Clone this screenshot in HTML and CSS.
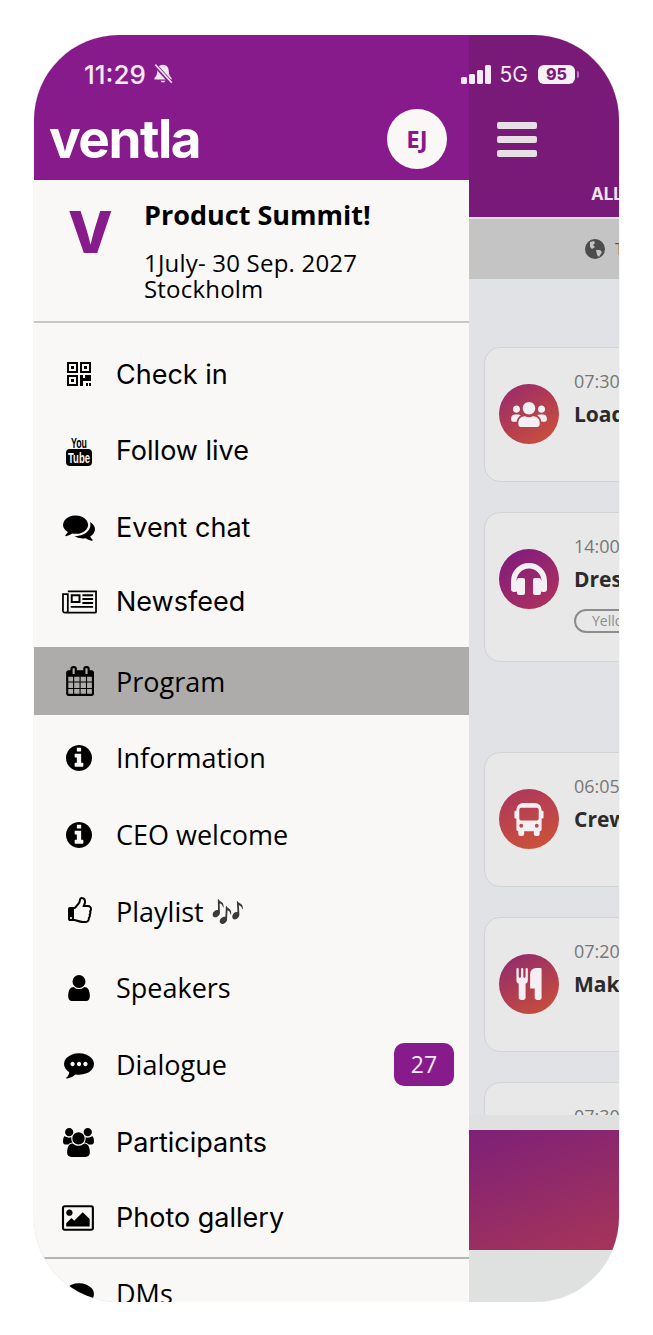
FILE: index.html
```html
<!DOCTYPE html>
<html lang="en">
<head>
  <meta charset="UTF-8">
  <meta name="viewport" content="width=device-width, initial-scale=1.0">
  <title>Ventla Product Summit</title>
  <link rel="stylesheet" href="styles.css">
</head>
<body>
  <div class="phone">

    <!-- Status bar sits over both the drawer and the page behind it -->
    <div class="status-bar">
      <div class="status-left">
        <span class="clock">11:29</span>
        <svg class="bell" viewBox="0 0 20 20"><path d="M10 1.5c-3.4 0-5.2 2.6-5.2 5.6 0 3.6-1.1 5-2.6 6.6v1.2h15.6v-1.2c-1.5-1.6-2.6-3-2.6-6.6 0-3-1.8-5.6-5.2-5.6z" fill="#f4e6f4"/><path d="M7.8 16.2a2.3 2.3 0 0 0 4.4 0z" fill="#f4e6f4"/><path d="M2.5 1.5l15 16.5" stroke="#871b8a" stroke-width="3.6"/><path d="M3 1.5l15 16.5" stroke="#f4e6f4" stroke-width="1.5"/></svg>
      </div>
      <div class="status-right">
        <div class="signal"><i class="bar-1"></i><i class="bar-2"></i><i class="bar-3"></i><i class="bar-4"></i></div>
        <span class="net">5G</span>
        <span class="battery">95</span>
        <span class="battery-nub"></span>
      </div>
    </div>

    <aside class="drawer">
      <header class="drawer-head">
        <span class="logo">ventla</span>
        <span class="avatar">EJ</span>
      </header>

      <div class="event-info">
        <span class="event-mark">V</span>
        <div class="event-text">
          <h1>Product Summit!</h1>
          <p>1July- 30 Sep. 2027<br>Stockholm</p>
        </div>
      </div>

      <nav class="menu">
        <a class="menu-row">
          <span class="menu-icon"><svg class="ic-qr" viewBox="0 0 24 24"><path fill-rule="evenodd" d="M0 0h11v11H0zM2 2v7h7V2zM4 4h3v3H4zM13 0h11v11H13zM15 2v7h7V2zM17 4h3v3h-3zM0 13h11v11H0zM2 15v7h7v-7zM4 17h3v3H4zM13 13h3v3h2v-3h6v6h-8v5h-3zM19 21h2v3h-2zM22 21h2v3h-2z"/></svg></span>
          <span class="menu-label menu-label-alt">Check in</span>
        </a>
        <a class="menu-row">
          <span class="menu-icon"><svg class="ic-yt" viewBox="0 0 26 30"><text class="yt-you" x="13" y="12" text-anchor="middle" textLength="16" lengthAdjust="spacingAndGlyphs">You</text><rect y="13" width="26" height="17" rx="4"/><text class="yt-tube" x="13" y="27" text-anchor="middle" textLength="22" lengthAdjust="spacingAndGlyphs">Tube</text></svg></span>
          <span class="menu-label menu-label-alt">Follow live</span>
        </a>
        <a class="menu-row">
          <span class="menu-icon"><svg class="ic-chat" viewBox="0 0 1792 1792"><path d="M1408 768q0 139-94 257t-256.5 186.5-353.5 68.5q-86 0-176-16-124 88-278 128-36 9-86 16h-3q-11 0-20.5-8t-11.5-21q-1-3-1-6.5t.5-6.5 2-6l2.5-5 3.5-5.5 4-5 4.5-5 4-4.5q5-6 23-25t26-29.5 22.5-29 25-38.5 20.5-44q-124-72-195-177t-71-224q0-139 94-257t256.5-186.5 353.5-68.5 353.5 68.5 256.5 186.5 94 257zm384 256q0 120-71 224.5t-195 176.5q10 24 20.5 44t25 38.5 22.5 29 26 29.5 23 25q1 1 4 4.5t4.5 5 4 5 3.5 5.5l2.5 5 2 6 .5 6.5-1 6.5q-3 14-13 22t-22 7q-50-7-86-16-154-40-278-128-90 16-176 16-271 0-472-132 58 4 88 4 161 0 309-45t264-129q125-92 192-212t67-254q0-77-23-152 129 71 204 178t75 230z"/></svg></span>
          <span class="menu-label menu-label-alt">Event chat</span>
        </a>
        <a class="menu-row menu-row-pull">
          <span class="menu-icon"><svg class="ic-news" viewBox="0 0 36 24"><path fill="none" stroke="#000" stroke-width="1.8" d="M6 1h29v21a1 1 0 0 1-1 1H3a2 2 0 0 1-2-2V4h5v17a2 2 0 0 1-2 2"/><path fill-rule="evenodd" d="M9 4h10v9H9zM11 6v5h6V6zM21 4h11v2H21zM21 8h11v2H21zM21 12h11v2H21zM9 16h23v2H9z"/></svg></span>
          <span class="menu-label menu-label-alt">Newsfeed</span>
        </a>
        <a class="menu-row menu-row-active">
          <span class="menu-icon"><svg class="ic-cal" viewBox="0 0 1664 1792"><path d="M192 1664h288v-288h-288v288zm352 0h320v-288h-320v288zm-352-352h288v-320h-288v320zm352 0h320v-320h-320v320zm-352-384h288v-288h-288v288zm736 736h320v-288h-320v288zm-384-736h320v-288h-320v288zm768 736h288v-288h-288v288zm-384-352h320v-320h-320v320zm-352-864v-288q0-13-9.5-22.5t-22.5-9.5h-64q-13 0-22.5 9.5t-9.5 22.5v288q0 13 9.5 22.5t22.5 9.5h64q13 0 22.5-9.5t9.5-22.5zm736 864h288v-320h-288v320zm-384-384h320v-288h-320v288zm384 0h288v-288h-288v288zm32-480v-288q0-13-9.5-22.5t-22.5-9.5h-64q-13 0-22.5 9.5t-9.5 22.5v288q0 13 9.5 22.5t22.5 9.5h64q13 0 22.5-9.5t9.5-22.5zm384-64v1280q0 52-38 90t-90 38h-1408q-52 0-90-38t-38-90v-1280q0-52 38-90t90-38h128v-96q0-66 47-113t113-47h64q66 0 113 47t47 113v96h384v-96q0-66 47-113t113-47h64q66 0 113 47t47 113v96h128q52 0 90 38t38 90z"/></svg></span>
          <span class="menu-label">Program</span>
        </a>
        <a class="menu-row">
          <span class="menu-icon"><svg class="ic-info" viewBox="128 128 1536 1536"><path d="M1152 1376v-160q0-14-9-23t-23-9h-96v-512q0-14-9-23t-23-9h-320q-14 0-23 9t-9 23v160q0 14 9 23t23 9h96v320h-96q-14 0-23 9t-9 23v160q0 14 9 23t23 9h448q14 0 23-9t9-23zm-128-896v-160q0-14-9-23t-23-9h-192q-14 0-23 9t-9 23v160q0 14 9 23t23 9h192q14 0 23-9t9-23zm640 416q0 209-103 385.5t-279.5 279.5-385.5 103-385.5-103-279.5-279.5-103-385.5 103-385.5 279.5-279.5 385.5-103 385.5 103 279.5 279.5 103 385.5z"/></svg></span>
          <span class="menu-label">Information</span>
        </a>
        <a class="menu-row">
          <span class="menu-icon"><svg class="ic-info" viewBox="128 128 1536 1536"><path d="M1152 1376v-160q0-14-9-23t-23-9h-96v-512q0-14-9-23t-23-9h-320q-14 0-23 9t-9 23v160q0 14 9 23t23 9h96v320h-96q-14 0-23 9t-9 23v160q0 14 9 23t23 9h448q14 0 23-9t9-23zm-128-896v-160q0-14-9-23t-23-9h-192q-14 0-23 9t-9 23v160q0 14 9 23t23 9h192q14 0 23-9t9-23zm640 416q0 209-103 385.5t-279.5 279.5-385.5 103-385.5-103-279.5-279.5-103-385.5 103-385.5 279.5-279.5 385.5-103 385.5 103 279.5 279.5 103 385.5z"/></svg></span>
          <span class="menu-label">CEO welcome</span>
        </a>
        <a class="menu-row">
          <span class="menu-icon"><svg class="ic-thumb" viewBox="0 0 1664 1792"><path d="M384 1344q0-26-19-45t-45-19-45 19-19 45 19 45 45 19 45-19 19-45zm1152-576q0-51-39-89.5t-89-38.5h-352q0-58 48-159.5t48-160.5q0-98-32-145t-128-47q-26 26-38 85t-30.5 125.5-59.5 109.5q-22 23-77 91-4 5-23 30t-31.5 41-34.5 42.5-40 44-38.5 35.5-40 27-35.5 9h-32v640h32q13 0 31.5 3t33 6.5 38 11 35 11.5 35.5 12.5 29 10.5q211 73 342 73h121q192 0 192-167 0-26-5-56 30-16 47.5-52.5t17.5-73.5-18-69q53-50 53-119 0-25-10-55.5t-25-47.5q32-1 53.5-47t21.5-81zm128-1q0 89-49 163 9 33 9 69 0 77-38 144 3 21 3 43 0 101-60 178 1 139-85 219.5t-227 80.5h-129q-96 0-189.5-22.5t-216.5-65.5q-116-40-138-40h-288q-53 0-90.5-37.5t-37.5-90.5v-640q0-53 37.5-90.5t90.5-37.5h274q36-24 137-155 58-75 107-128 24-25 35.5-85.5t30.5-126.5 62-108q39-37 90-37 84 0 151 32.5t102 101.5 35 186q0 93-48 192h176q104 0 180 76t76 179z"/></svg></span>
          <span class="menu-label">Playlist <span class="menu-emoji">🎶</span></span>
        </a>
        <a class="menu-row">
          <span class="menu-icon"><svg class="ic-user" viewBox="256 128 1280 1536"><path d="M1536 1399q0 109-62.5 187t-150.5 78h-854q-88 0-150.5-78t-62.5-187q0-85 8.5-160.5t31.5-152 58.5-131 94-89 134.5-34.5q131 128 313 128t313-128q76 0 134.5 34.5t94 89 58.5 131 31.5 152 8.5 160.5zm-256-887q0 159-112.5 271.5t-271.5 112.5-271.5-112.5-112.5-271.5 112.5-271.5 271.5-112.5 271.5 112.5 112.5 271.5z"/></svg></span>
          <span class="menu-label">Speakers</span>
        </a>
        <a class="menu-row">
          <span class="menu-icon"><svg class="ic-dialog" viewBox="0 128 1792 1536"><path d="M640 896q0-53-37.5-90.5t-90.5-37.5-90.5 37.5-37.5 90.5 37.5 90.5 90.5 37.5 90.5-37.5 37.5-90.5zm384 0q0-53-37.5-90.5t-90.5-37.5-90.5 37.5-37.5 90.5 37.5 90.5 90.5 37.5 90.5-37.5 37.5-90.5zm384 0q0-53-37.5-90.5t-90.5-37.5-90.5 37.5-37.5 90.5 37.5 90.5 90.5 37.5 90.5-37.5 37.5-90.5zm384 0q0 174-120 321.5t-326 233-450 85.5q-110 0-211-18-173 173-435 229-52 10-86 13-12 1-22-6t-13-18q-4-15 20-37 5-5 23.5-21.5t25.5-23.5 23.5-25.5 24-31.5 20.5-37 20-48 14.5-57.5 12.5-72.5q-146-90-229.5-216.5t-83.5-269.5q0-174 120-321.5t326-233 450-85.5 450 85.5 326 233 120 321.5z"/></svg></span>
          <span class="menu-label">Dialogue</span>
          <span class="menu-badge">27</span>
        </a>
        <a class="menu-row menu-row-push">
          <span class="menu-icon"><svg class="ic-users" viewBox="0 0 2048 1792"><path d="M593 896q-162 5-265 128h-134q-82 0-138-40.5t-56-118.5q0-353 124-353 6 0 43.5 21t97.5 42.5 119 21.5q67 0 133-23-5 37-5 66 0 139 81 256zm1071 637q0 120-73 189.5t-194 69.5h-874q-121 0-194-69.5t-73-189.5q0-53 3.5-103.5t14-109 26.5-108.5 43-97.5 62-81 85.5-53.5 111.5-20q10 0 43 21.5t73 48 107 48 135 21.5 135-21.5 107-48 73-48 43-21.5q61 0 111.5 20t85.5 53.5 62 81 43 97.5 26.5 108.5 14 109 3.5 103.5zm-1024-1277q0 106-75 181t-181 75-181-75-75-181 75-181 181-75 181 75 75 181zm704 384q0 159-112.5 271.5t-271.5 112.5-271.5-112.5-112.5-271.5 112.5-271.5 271.5-112.5 271.5 112.5 112.5 271.5zm576 225q0 78-56 118.5t-138 40.5h-134q-103-123-265-128 81-117 81-256 0-29-5-66 66 23 133 23 59 0 119-21.5t97.5-42.5 43.5-21q124 0 124 353zm-128-609q0 106-75 181t-181 75-181-75-75-181 75-181 181-75 181 75 75 181z"/></svg></span>
          <span class="menu-label menu-label-alt">Participants</span>
        </a>
        <a class="menu-row menu-row-pull">
          <span class="menu-icon"><svg class="ic-photo" viewBox="0 128 1920 1536"><path d="M576 576q0 80-56 136t-136 56-136-56-56-136 56-136 136-56 136 56 56 136zm1024 384v448h-1408v-192l320-320 160 160 512-512zm96-704h-1600q-13 0-22.5 9.5t-9.5 22.5v1216q0 13 9.5 22.5t22.5 9.5h1600q13 0 22.5-9.5t9.5-22.5v-1216q0-13-9.5-22.5t-22.5-9.5zm160 32v1216q0 66-47 113t-113 47h-1600q-66 0-113-47t-47-113v-1216q0-66 47-113t113-47h1600q66 0 113 47t47 113z"/></svg></span>
          <span class="menu-label menu-label-alt">Photo gallery</span>
        </a>
      </nav>

      <a class="menu-row menu-row-last">
        <span class="menu-icon"><svg class="ic-dialog" viewBox="0 128 1792 1536"><path d="M1792 896q0 174-120 321.5t-326 233-450 85.5q-110 0-211-18-173 173-435 229-52 10-86 13-12 1-22-6t-13-18q-4-15 20-37 5-5 23.5-21.5t25.5-23.5 23.5-25.5 24-31.5 20.5-37 20-48 14.5-57.5 12.5-72.5q-146-90-229.5-216.5t-83.5-269.5q0-174 120-321.5t326-233 450-85.5 450 85.5 326 233 120 321.5z"/></svg></span>
        <span class="menu-label">DMs</span>
      </a>
    </aside>

    <main class="page">
      <header class="page-head">
        <div class="burger"><i></i><i></i><i></i></div>
        <div class="page-tab">ALL</div>
      </header>
      <div class="zone-bar">
        <svg class="globe" viewBox="0 0 20 20"><circle cx="10" cy="10" r="10" fill="#4d4d4d"/><path d="M5 3l4-1 1 2-2 2 2 2-3 2-2-2zM11 11l4 0 2 2-3 5-2-2z" fill="#c4c4c4"/></svg>
        <span class="zone-text">Time</span>
      </div>

      <div class="schedule">
        <article class="card">
          <span class="card-icon grad-a"><svg class="ic-white-users" viewBox="0 32 640 448"><path d="M96 224c35.3 0 64-28.7 64-64s-28.7-64-64-64-64 28.7-64 64 28.7 64 64 64zm448 0c35.3 0 64-28.7 64-64s-28.7-64-64-64-64 28.7-64 64 28.7 64 64 64zm32 32h-64c-17.6 0-33.5 7.1-45.1 18.6 40.3 22.1 68.9 62 75.1 109.4h66c17.7 0 32-14.3 32-32v-32c0-35.3-28.7-64-64-64zm-256 0c61.9 0 112-50.1 112-112S381.900 32 320 32 208 82.100 208 144s50.100 112 112 112zm76.800 32h-8.300c-20.800 10-43.900 16-68.500 16s-47.600-6-68.500-16h-8.300C179.600 288 128 339.600 128 403.200V432c0 26.500 21.500 48 48 48h288c26.500 0 48-21.500 48-48v-28.800c0-63.600-51.600-115.200-115.200-115.200zm-223.700-13.400C161.500 263.100 145.600 256 128 256H64c-35.300 0-64 28.700-64 64v32c0 17.700 14.300 32 32 32h65.900c6.300-47.400 34.900-87.300 75.200-109.400z"/></svg></span>
          <div class="card-body">
            <span class="card-time">07:30</span>
            <span class="card-title">Loading</span>
          </div>
        </article>

        <article class="card card-tall">
          <span class="card-icon grad-b"><svg class="ic-white-phones" viewBox="0 0 36 32"><path d="M2.8 23V18a15.2 15.2 0 0 1 30.4 0v5" fill="none" stroke="#f4eff2" stroke-width="5.5"/><rect y="17" width="7" height="12" rx="3"/><rect x="29" y="17" width="7" height="12" rx="3"/><rect x="6" y="15" width="8" height="17" rx="2"/><rect x="22" y="15" width="8" height="17" rx="2"/></svg></span>
          <div class="card-body">
            <span class="card-time">14:00</span>
            <span class="card-title">Dressing</span>
            <span class="card-tag">Yellow</span>
          </div>
        </article>

        <article class="card card-next-day">
          <span class="card-icon grad-c"><svg class="ic-white-bus" viewBox="0 0 30 34"><path fill-rule="evenodd" d="M9 0h12a7 7 0 0 1 7 7v1h1a1 1 0 0 1 1 1v6a1 1 0 0 1-1 1h-1v11a2 2 0 0 1-2 2v3a2 2 0 0 1-2 2h-2a2 2 0 0 1-2-2v-3h-10v3a2 2 0 0 1-2 2h-2a2 2 0 0 1-2-2v-3a2 2 0 0 1-2-2v-11h-1a1 1 0 0 1-1-1v-6a1 1 0 0 1 1-1h1v-1a7 7 0 0 1 7-7zM7 5a2 2 0 0 0-2 2v9a2 2 0 0 0 2 2h16a2 2 0 0 0 2-2v-9a2 2 0 0 0-2-2zM7 21.5a2 2 0 1 0 0 4 2 2 0 0 0 0-4zM23 21.5a2 2 0 1 0 0 4 2 2 0 0 0 0-4z"/></svg></span>
          <div class="card-body">
            <span class="card-time">06:05</span>
            <span class="card-title">Crew</span>
          </div>
        </article>

        <article class="card">
          <span class="card-icon grad-d"><svg class="ic-white-fork" viewBox="0 0 1408 1792"><path d="M640 64v640q0 61-35.5 111t-92.5 70v779q0 52-38 90t-90 38h-128q-52 0-90-38t-38-90v-779q-57-20-92.5-70t-35.5-111v-640q0-26 19-45t45-19 45 19 19 45v416q0 26 19 45t45 19 45-19 19-45v-416q0-26 19-45t45-19 45 19 19 45v416q0 26 19 45t45 19 45-19 19-45v-416q0-26 19-45t45-19 45 19 19 45zm768 0v1600q0 52-38 90t-90 38h-128q-52 0-90-38t-38-90v-512h-224q-13 0-22.5-9.5t-9.5-22.5v-800q0-132 94-226t226-94h256q26 0 45 19t19 45z"/></svg></span>
          <div class="card-body">
            <span class="card-time">07:20</span>
            <span class="card-title">Make up</span>
          </div>
        </article>

        <article class="card">
          <span class="card-icon grad-a"></span>
          <div class="card-body">
            <span class="card-time">07:30</span>
            <span class="card-title">Sound</span>
          </div>
        </article>
      </div>

      <div class="banner"></div>
    </main>
  </div>
</body>
</html>
```

FILE: styles.css
```css
body {
  margin: 0;
  background-color: white;
  font-family: "Open Sans", "Noto Sans", sans-serif;
  color: black;
}

.phone {
  position: relative;
  display: flex;
  width: 585px;
  height: 1267px;
  margin: 35px 0 0 34px;
  border-radius: 85px;
  overflow: hidden;
  box-shadow: 0 0 1px rgba(0, 0, 0, 0.35);
}

/* Status bar */
.status-bar {
  position: absolute;
  z-index: 1;
  top: 24px;
  left: 50px;
  right: 40px;
  height: 30px;
  display: flex;
  align-items: center;
  justify-content: space-between;
  color: #f6eaf6;
}

.status-left, .status-right {
  display: flex;
  align-items: center;
}

.clock {
  font-family: "Inter", sans-serif;
  font-size: 26px;
  font-weight: 500;
}

.bell {
  width: 22px;
  height: 22px;
  margin-left: 6px;
}

.signal {
  display: flex;
  align-items: flex-end;
  gap: 2px;
  height: 19px;
}

.signal i {
  display: block;
  width: 6px;
  background-color: #f6eaf6;
  border-radius: 1.5px;
}

.bar-1 { height: 7px; }
.bar-2 { height: 10px; }
.bar-3 { height: 14px; }
.bar-4 { height: 19px; }

.net {
  font-family: "Inter", sans-serif;
  font-size: 21px;
  margin-left: 9px;
}

.battery {
  width: 37px;
  height: 19px;
  margin-left: 10px;
  background-color: #f8f2f8;
  border-radius: 6px;
  color: #7c1a7c;
  font-family: "Inter", sans-serif;
  font-size: 16px;
  font-weight: 800;
  line-height: 19px;
  text-align: center;
}

.battery-nub {
  width: 2px;
  height: 7px;
  margin-left: 2px;
  background-color: #b77fb9;
  border-radius: 0 2px 2px 0;
}

/* Drawer */
.drawer {
  flex: 0 0 435px;
  background-color: #f9f8f7;
  overflow: hidden;
}

.drawer-head {
  display: flex;
  align-items: flex-end;
  justify-content: space-between;
  height: 145px;
  padding: 0 22px 11px 15px;
  box-sizing: border-box;
  background-color: #881b8b;
}

.logo {
  font-family: "Inter", sans-serif;
  font-size: 53px;
  font-weight: 700;
  letter-spacing: -1.5px;
  line-height: 60px;
  color: white;
}

.avatar {
  width: 60px;
  height: 60px;
  border-radius: 50%;
  background-color: #f9f8f7;
  color: #881b8b;
  font-size: 24px;
  font-weight: 700;
  line-height: 60px;
  text-align: center;
}

.event-info {
  display: flex;
  height: 143px;
  box-sizing: border-box;
  padding-left: 34px;
  border-bottom: 2px solid #c8c7c6;
}

.event-mark {
  width: 44px;
  margin-top: 17px;
  font-family: "Inter", sans-serif;
  font-size: 58px;
  font-weight: 800;
  line-height: 70px;
  color: #881b8b;
  text-align: center;
}

.event-text {
  margin-left: 32px;
}

.event-text h1 {
  margin: 16px 0 0;
  font-size: 27px;
  font-weight: 700;
  line-height: 38px;
}

.event-text p {
  margin: 16px 0 0;
  font-size: 24px;
  letter-spacing: 0.2px;
  line-height: 26px;
}

.menu {
  display: flex;
  flex-direction: column;
  gap: 8.6px;
  padding-top: 17px;
}

.menu-row {
  display: flex;
  align-items: center;
  height: 68px;
  flex: none;
  padding: 0 15px 0 27px;
  box-sizing: border-box;
}

.menu-row-pull {
  margin-top: -2px;
}

.menu-row-push {
  margin-top: 2px;
}

.menu-row-active {
  margin-top: 3px;
  background-color: #adacaa;
}

.menu-row-last {
  border-top: 2px solid #b5b4b2;
  height: 72px;
  margin-top: 5px;
}

.menu-icon {
  display: flex;
  align-items: center;
  justify-content: center;
  flex: none;
  width: 36px;
  margin-right: 19px;
}

.menu-icon svg {
  display: block;
  fill: black;
  overflow: visible;
}

.menu-label {
  flex: 1;
  font-size: 27px;
  white-space: nowrap;
}

.menu-label-alt {
  font-family: "Inter", sans-serif;
  font-size: 27px;
}

.menu-emoji {
  filter: grayscale(1) brightness(0.55);
}

.menu-badge {
  width: 60px;
  height: 43px;
  background-color: #881b8b;
  border-radius: 10px;
  color: #f6eaf6;
  font-size: 23px;
  line-height: 43px;
  text-align: center;
}

.ic-qr { width: 24px; height: 24px; }
.ic-yt { width: 26px; height: 30px; }
.ic-chat { width: 32px; height: 32px; }
.ic-news { width: 35px; height: 24px; }
.ic-cal { width: 28px; height: 30px; }
.ic-info { width: 26px; height: 26px; }
.ic-thumb { width: 26px; height: 28px; }
.ic-user { width: 22px; height: 26px; }
.ic-dialog { width: 30px; height: 26px; }
.ic-users { width: 33px; height: 29px; }
.ic-photo { width: 32px; height: 26px; }

.yt-you {
  font-family: "Liberation Sans", sans-serif;
  font-size: 15px;
  font-weight: 700;
}

.yt-tube {
  font-family: "Liberation Sans", sans-serif;
  font-size: 15px;
  font-weight: 700;
  fill: #f9f8f7;
}

/* Page behind the drawer */
.page {
  flex: 1;
  min-width: 0;
  display: flex;
  flex-direction: column;
  background-color: #dfe0e0;
  overflow: hidden;
}

.page-head {
  flex: none;
  height: 182px;
  box-sizing: border-box;
  padding: 87px 0 0 28px;
  background-color: #7a1a78;
}

.burger {
  display: flex;
  flex-direction: column;
  gap: 7px;
  width: 40px;
}

.burger i {
  display: block;
  height: 7px;
  background-color: #e6e0e4;
  border-radius: 2px;
}

.page-tab {
  margin-top: 27px;
  padding-left: 94px;
  font-family: "Inter", sans-serif;
  font-size: 17px;
  font-weight: 700;
  color: #f0e4f0;
  white-space: nowrap;
}

.zone-bar {
  flex: none;
  display: flex;
  align-items: center;
  height: 60px;
  margin-top: 2px;
  padding-left: 116px;
  background-color: #c4c4c4;
  white-space: nowrap;
}

.globe {
  flex: none;
  width: 20px;
  height: 20px;
}

.zone-text {
  margin-left: 10px;
  font-size: 16px;
  color: #555;
}

.schedule {
  flex: none;
  height: 836px;
  display: flex;
  flex-direction: column;
  gap: 30px;
  padding: 68px 0 0 15px;
  box-sizing: border-box;
  background-color: #e0e2e5;
  overflow: hidden;
}

.card {
  flex: none;
  display: flex;
  width: 420px;
  height: 135px;
  padding: 36px 0 0 14px;
  box-sizing: border-box;
  background-color: #e8e8e8;
  border: 1px solid #d3d3d3;
  border-radius: 16px;
}

.card-tall {
  height: 150px;
}

.card-next-day {
  margin-top: 60px;
}

.card-icon {
  flex: none;
  display: flex;
  align-items: center;
  justify-content: center;
  width: 60px;
  height: 60px;
  border-radius: 50%;
}

.card-icon svg {
  display: block;
  fill: #f4eff2;
}

.grad-a { background-image: linear-gradient(145deg, #96286f, #cf5335); }
.grad-b { background-image: linear-gradient(145deg, #7c1a80, #b23358); }
.grad-c { background-image: linear-gradient(160deg, #ab3560, #cf5535); }
.grad-d { background-image: linear-gradient(150deg, #8f2870, #cc5236); }

.ic-white-users { width: 36px; height: 25px; }
.ic-white-phones { width: 36px; height: 32px; }
.ic-white-bus { width: 30px; height: 33px; }
.ic-white-fork { width: 26px; height: 32px; }

.card-body {
  display: flex;
  flex-direction: column;
  align-items: flex-start;
  margin-left: 15px;
  margin-top: -15px;
}

.card-time {
  font-size: 18px;
  line-height: 24px;
  color: #777;
}

.card-title {
  font-size: 21px;
  font-weight: 700;
  line-height: 42px;
  color: #2b2b2b;
}

.card-tag {
  margin-top: 9px;
  padding: 0 16px;
  border: 2px solid #8c8c8c;
  border-radius: 12px;
  font-size: 14px;
  line-height: 20px;
  color: #8c8c8c;
}

.banner {
  flex: none;
  height: 120px;
  margin-top: 15px;
  background-image: linear-gradient(160deg, #7e2078, #a63558);
}
```
